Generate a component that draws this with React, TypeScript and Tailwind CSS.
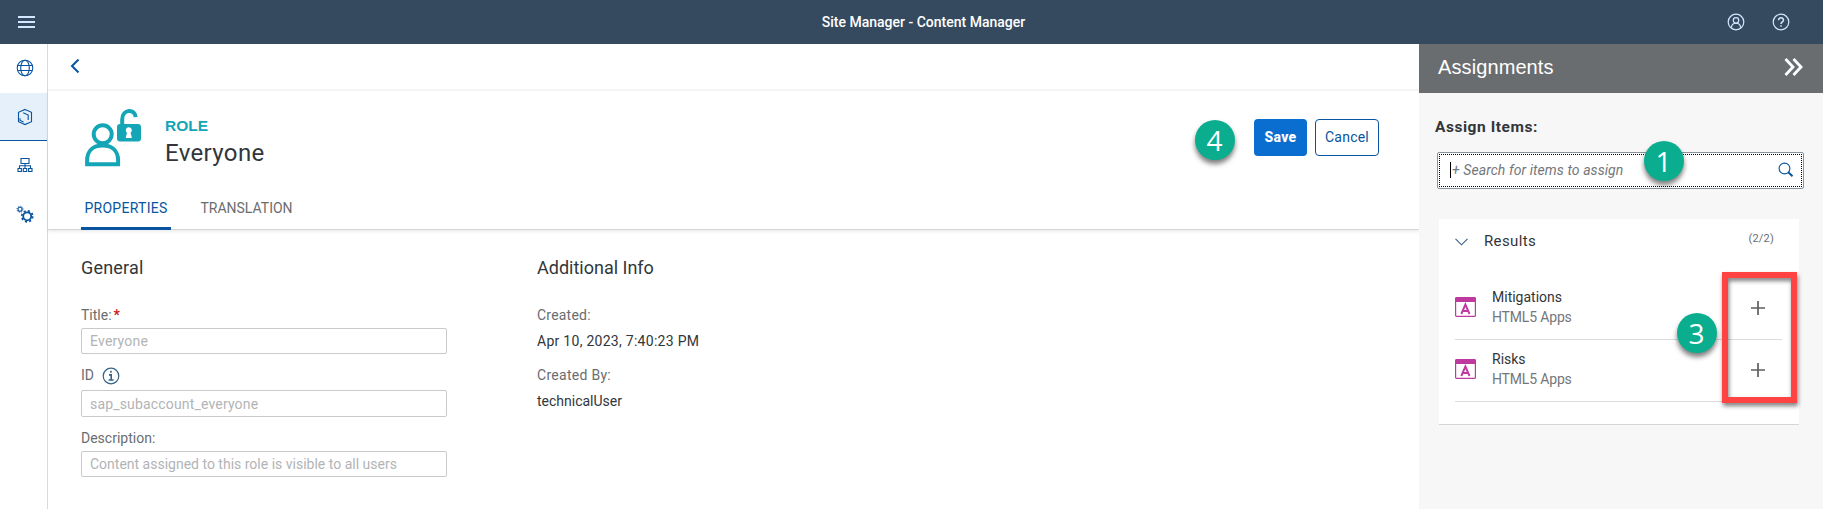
import type { ReactNode } from "react";

const line = { fill: "none", stroke: "currentColor" } as const;

function GlobeIcon() {
  return (
    <svg width="18" height="18" viewBox="0 0 18 18" {...line} strokeWidth="1.1">
      <circle cx="9" cy="9" r="7.8" />
      <ellipse cx="9" cy="9" rx="4.3" ry="7.8" />
      <path d="M2 6.5H16M2 11.5H16" />
    </svg>
  );
}

function ContentIcon() {
  return (
    <svg width="18" height="18" viewBox="0 0 18 18" {...line} strokeWidth="1.1">
      <path d="M9 1.4L15.5 4.3V13.7L9 16.6L2.5 13.7V4.3Z" />
      <path d="M7.2 4.7L12.2 7V12M4 10.3V12.4L7.6 14" />
    </svg>
  );
}

function HierarchyIcon() {
  return (
    <svg width="18" height="18" viewBox="0 0 18 18" {...line} strokeWidth="1.1">
      <path d="M5 2.5H13V7.5H5ZM9 7.5V12M3.5 12V9.8H14.5V12" />
      <path d="M2 12.5H5.4V15.5H2ZM7.3 12.5H10.7V15.5H7.3ZM12.6 12.5H16V15.5H12.6Z" />
    </svg>
  );
}

function GearsIcon() {
  return (
    <svg width="18" height="18" viewBox="0 0 18 18" {...line}>
      <circle cx="11.2" cy="11.3" r="4" strokeWidth="1.8" />
      <circle cx="11.2" cy="11.3" r="5.5" strokeWidth="1.7" strokeDasharray="2.1 2.22" />
      <circle cx="4" cy="4.3" r="2" strokeWidth="1.1" />
      <circle cx="4" cy="4.3" r="3" strokeWidth="1" strokeDasharray="1.1 1.26" />
    </svg>
  );
}

function RoleIcon() {
  return (
    <svg width="58" height="58" viewBox="0 0 58 58" className="text-[#14a5b6]" {...line} strokeWidth="4">
      <circle cx="17.7" cy="25.2" r="9" />
      <path d="M2.1 55.2V51.5C2.1 42 8 36.5 17.6 36.5S33.1 42 33.1 51.5V55.2Z" />
      <path d="M37.2 17V10.5C37.2 -0.4 50.3 -0.4 50.7 8.2" strokeLinejoin="round" />
      <rect x="32" y="15" width="24" height="17.5" rx="3" fill="currentColor" stroke="none" />
      <path d="M43.8 18.2a3.1 3.1 0 0 1 1.8 5.6l1.3 5.2h-6.2l1.3-5.2a3.1 3.1 0 0 1 1.8-5.6Z" fill="#fff" stroke="none" />
    </svg>
  );
}

function AppIcon() {
  return (
    <svg width="21" height="20" viewBox="0 0 21 20" className="-mt-1 shrink-0 text-[#c0399f]" {...line}>
      <rect x="0.6" y="0.6" width="19.8" height="18.8" rx="1" strokeWidth="1.2" />
      <path d="M0.5 0.5H20.5V5H0.5Z" fill="currentColor" stroke="none" />
      <path d="M6.3 17L10.4 7.5L14.5 17M7.8 14H13" strokeWidth="1.9" />
    </svg>
  );
}

function NavItem({ active, children }: { active?: boolean; children: ReactNode }) {
  return (
    <div
      className={
        active
          ? "flex h-[48px] items-center justify-center border-b border-[#0854a0] bg-[#e5f0fa] pl-0.5"
          : "flex h-[49px] items-center justify-center pb-0.5 pl-0.5"
      }
    >
      {children}
    </div>
  );
}

function Field({ label, value, className }: { label: ReactNode; value: string; className: string }) {
  return (
    <div>
      <div className="flex h-5 items-center text-[#6a6d70]">{label}</div>
      <div className={`flex w-[366px] items-center rounded-[2px] border border-[#c8cacc] px-2 text-[#b2b4b6] ${className}`}>
        {value}
      </div>
    </div>
  );
}

function Badge({ n, className }: { n: number; className: string }) {
  return (
    <div
      className={`absolute flex size-10 items-center justify-center rounded-full bg-[#0aae8f] pr-px font-['Open_Sans',sans-serif] text-[28px] leading-none font-medium text-white shadow-[0_4px_5px_rgba(0,0,0,0.5)] ${className}`}
    >
      {n}
    </div>
  );
}

function ResultRow({ name }: { name: string }) {
  return (
    <div className="flex h-[62px] items-center border-b border-[#dcdcdc]">
      <AppIcon />
      <div className="ml-4 flex-1 pb-[3px]">
        <div className="text-[#32363a]">{name}</div>
        <div className="tracking-[-0.012em] text-[#74777a]">HTML5 Apps</div>
      </div>
      <svg width="14" height="14" viewBox="0 0 14 14" className="-mt-0.5 mr-[17px] text-[#5c5f62]" {...line} strokeWidth="1.7">
        <path d="M7 0V14M0 7H14" />
      </svg>
    </div>
  );
}

export default function App() {
  return (
    <div className="relative flex h-[509px] w-[1823px] flex-col overflow-hidden bg-white font-[Roboto,sans-serif] text-sm text-[#32363a]">
      <header className="flex h-11 shrink-0 items-center bg-[#354a5f] text-white">
        <svg width="17" height="12" viewBox="0 0 17 12" className="ml-[18px] text-[#d1e8ff]" {...line} strokeWidth="2">
          <path d="M0 1H17M0 6H17M0 11H17" />
        </svg>
        <div className="flex-1 pl-[85px] text-center font-medium">Site Manager - Content Manager</div>
        <div className="mr-[33px] flex gap-[27px] text-[#d1e8ff]">
          <svg width="18" height="18" viewBox="0 0 18 18" {...line} strokeWidth="1.2">
            <circle cx="9" cy="9" r="7.8" />
            <circle cx="9" cy="7.4" r="2.7" />
            <path d="M4.5 14.6C4.5 8.8 13.5 8.8 13.5 14.6" />
          </svg>
          <svg width="18" height="18" viewBox="0 0 18 18" {...line} strokeWidth="1.2">
            <circle cx="9" cy="9" r="7.8" />
            <path d="M6.5 7.2C6.5 4 11.5 4 11.5 7.1C11.5 8.8 9 8.9 9 11M9 12.2V13.7" strokeWidth="1.5" />
          </svg>
        </div>
      </header>

      <div className="flex min-h-0 flex-1">
        <nav className="w-12 shrink-0 border-r border-[#d9d9d9] text-[#0854a0]">
          <NavItem><GlobeIcon /></NavItem>
          <NavItem active><ContentIcon /></NavItem>
          <NavItem><HierarchyIcon /></NavItem>
          <NavItem><GearsIcon /></NavItem>
        </nav>

        <main className="flex flex-1 flex-col">
          <div className="flex h-[47px] shrink-0 items-center border-b-2 border-[#f5f5f5] pb-px pl-[22px]">
            <svg width="10" height="14" viewBox="0 0 10 14" className="text-[#0854a0]" {...line} strokeWidth="2">
              <path d="M8.5 0.5L2 7L8.5 13.5" />
            </svg>
          </div>

          <section className="flex h-[139px] shrink-0 flex-col justify-between border-b border-[#d5d5d5] shadow-[0_2px_3px_rgba(0,0,0,0.07)]">
            <div className="flex items-start pt-[18px] pl-[37px]">
              <RoleIcon />
              <div className="ml-[22px] pt-[7px]">
                <div className="font-['Liberation_Sans',sans-serif] text-[15.5px] leading-5 font-bold text-[#14a5b6]">ROLE</div>
                <div className="mt-px text-2xl leading-8 tracking-[0.015em]">Everyone</div>
              </div>
              <div className="mt-[10px] mr-10 ml-auto flex gap-2">
                <button className="h-[37px] w-[53px] rounded bg-[#0a6ed1] pb-0.5 font-extrabold tracking-[0.02em] text-white">Save</button>
                <button className="h-[37px] w-16 rounded border border-[#0854a0] pb-0.5 tracking-[0.015em] text-[#0854a0]">Cancel</button>
              </div>
            </div>
            <div className="-mb-px flex gap-[19px] pl-[33px] leading-5">
              <div className="h-[32px] w-[90px] border-b-[3px] border-[#0854a0] text-center tracking-[0.02em] text-[#0854a0]">PROPERTIES</div>
              <div className="h-[32px] w-[113px] text-center text-[#6a6d70]">TRANSLATION</div>
            </div>
          </section>

          <section className="flex pt-[26px] pl-[33px]">
            <div className="w-[457px]">
              <h2 className="mb-[25px] text-lg leading-6 tracking-[0.01em]">General</h2>
              <Field label={<>Title:<span className="ml-0.5 font-bold text-[#cc1919]">*</span></>} value="Everyone" className="mt-[3px] mb-[11px] h-[26px] tracking-[0.015em]" />
              <Field
                label={
                  <>
                    ID
                    <svg width="18" height="18" viewBox="0 0 18 18" className="mt-0.5 ml-2 text-[#346187]" {...line} strokeWidth="1.2">
                      <circle cx="9" cy="9" r="7.8" />
                      <path d="M9 3.8V5.8M7 7.9H9.2V13M6.6 13H11.6" strokeWidth="1.6" />
                    </svg>
                  </>
                }
                value="sap_subaccount_everyone"
                className="mt-[5px] mb-[11px] h-[27px] tracking-[0.012em]"
              />
              <Field label="Description:" value="Content assigned to this role is visible to all users" className="mt-[3px] h-[26px]" />
            </div>
            <div className="-ml-px leading-5">
              <h2 className="mb-[25px] text-lg leading-6">Additional Info</h2>
              <div className="tracking-[0.015em] text-[#6a6d70]">Created:</div>
              <div className="mt-1.5 tracking-[0.02em]">Apr 10, 2023, 7:40:23 PM</div>
              <div className="mt-3.5 tracking-[0.02em] text-[#6a6d70]">Created By:</div>
              <div className="mt-1.5">technicalUser</div>
            </div>
          </section>
        </main>

        <aside className="w-[404px] shrink-0 bg-[#f7f7f7]">
          <div className="flex h-[49px] items-center justify-between bg-[#6a6d70] pr-[20px] pl-[19px] text-white">
            <h1 className="pb-1 font-['Liberation_Sans',sans-serif] text-xl tracking-[0.005em]">Assignments</h1>
            <svg width="19" height="18" viewBox="0 0 19 18" className="-mt-1" {...line} strokeWidth="2.8">
              <path d="M1.5 1L9 9L1.5 17M9.5 1L17 9L9.5 17" />
            </svg>
          </div>
          <div className="pt-[22px] pr-[19px] pl-[18px]">
            <div className="-ml-0.5 text-[15.5px] leading-6 font-bold tracking-[0.035em]">Assign Items:</div>
            <div className="mt-[13px] h-[37px] rounded-[2px] border border-[#89919a] bg-white p-px">
              <div className="flex h-full items-center border border-dotted border-black pr-[7px] pb-px pl-2.5">
                <span className="h-4 w-px bg-black" />
                <span className="flex-1 pl-px tracking-[0.005em] text-[#74777a] italic">+ Search for items to assign</span>
                <svg width="16" height="16" viewBox="0 0 16 16" className="text-[#0854a0]" {...line} strokeWidth="1.1">
                  <circle cx="6.5" cy="6.5" r="5.4" />
                  <path d="M10.3 10.3L14.5 14.3" strokeWidth="2" />
                </svg>
              </div>
            </div>
            <div className="mt-[30px] ml-0.5 h-[206px] w-[360px] border-b border-[#d5d5d5] bg-white pr-[17px] pl-4">
              <div className="flex h-[59px] items-start pt-3">
                <svg width="13" height="8" viewBox="0 0 13 8" className="mt-[7px] text-[#346187]" {...line} strokeWidth="1.1">
                  <path d="M0.5 0.8L6.5 6.8L12.5 0.8" />
                </svg>
                <div className="ml-4 flex-1 text-[15px] leading-5 tracking-[0.025em]">Results</div>
                <div className="mr-2 text-[11px] leading-[15px] tracking-[0.02em] text-[#6a6d70]">(2/2)</div>
              </div>
              <ResultRow name="Mitigations" />
              <ResultRow name="Risks" />
            </div>
          </div>
        </aside>
      </div>

      <div className="absolute top-[272px] left-[1722px] h-[131px] w-[75px] border-[6px] border-[#ff4242] drop-shadow-[1px_3px_2px_rgba(0,0,0,0.5)]" />
      <Badge n={4} className="top-[120px] left-[1195px]" />
      <Badge n={1} className="top-[141px] left-[1644px]" />
      <Badge n={3} className="top-[313px] left-[1677px]" />
    </div>
  );
}
